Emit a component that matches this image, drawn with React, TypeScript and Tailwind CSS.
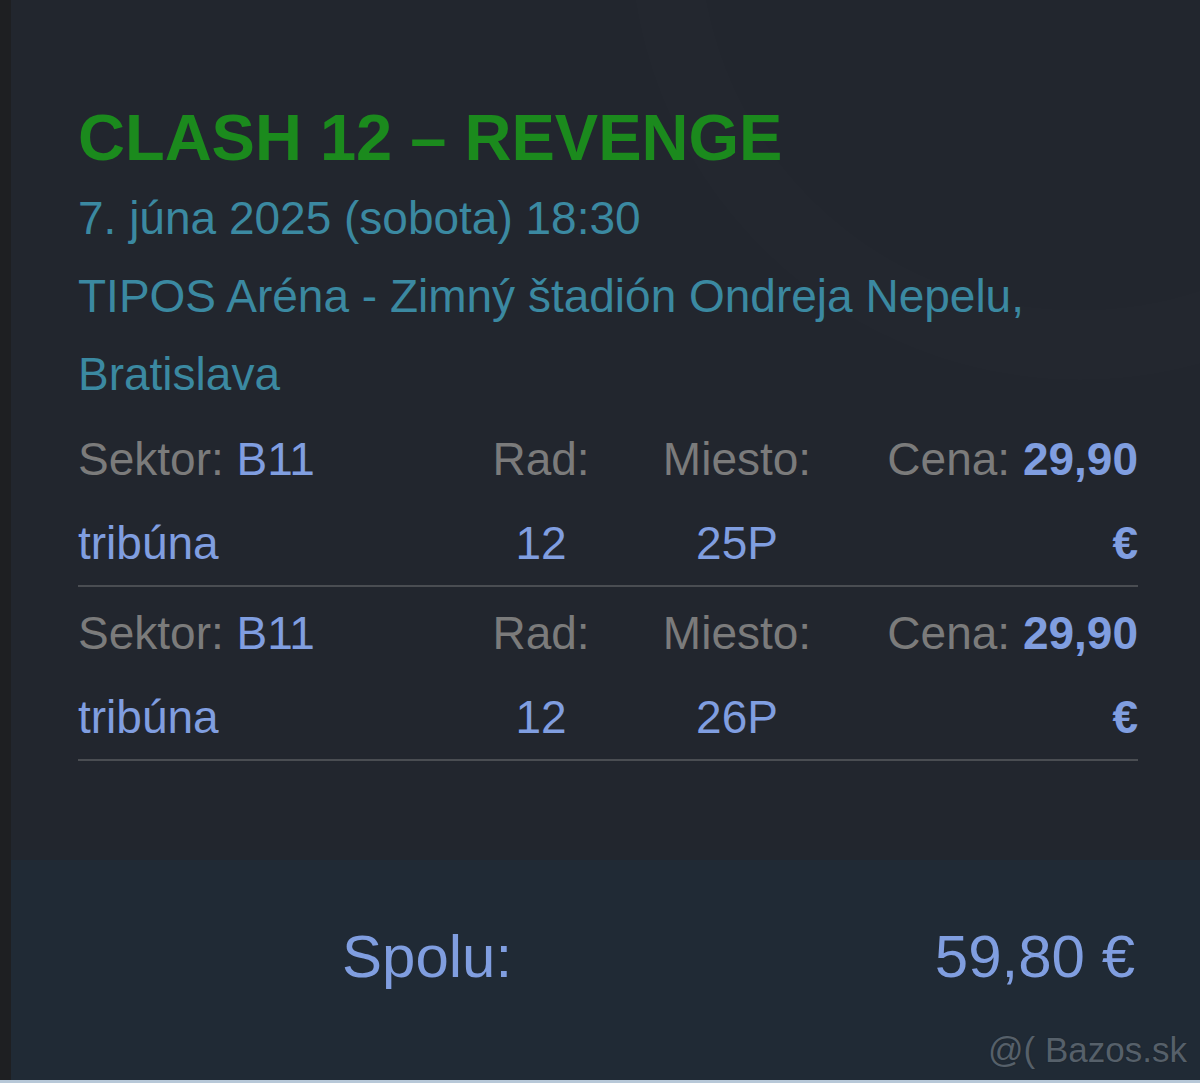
import React from "react";

const tickets = [
  { sektor: "B11", typ: "tribúna", rad: "12", miesto: "25P", cena: "29,90" },
  { sektor: "B11", typ: "tribúna", rad: "12", miesto: "26P", cena: "29,90" },
];

function Ticket({ t }: { t: (typeof tickets)[number] }) {
  return (
    <div className="pt-[4px]">
      <div className="grid grid-cols-[390px_146px_246px_278px] text-[46px] leading-[84px]">
        <div className="text-[#7b7b7b]">
          Sektor: <span className="text-[#809ee0]">{t.sektor}</span>
        </div>
        <div className="text-center text-[#7b7b7b]">Rad:</div>
        <div className="text-center text-[#7b7b7b]">Miesto:</div>
        <div className="text-right text-[#7b7b7b] whitespace-nowrap">
          Cena: <span className="font-bold text-[#809ee0]">{t.cena}</span>
        </div>
        <div className="text-[#809ee0]">{t.typ}</div>
        <div className="text-center text-[#809ee0]">{t.rad}</div>
        <div className="text-center text-[#809ee0]">{t.miesto}</div>
        <div className="text-right font-bold text-[#809ee0]">€</div>
      </div>
      <div className="h-[2px] bg-[#4a4d52]" />
    </div>
  );
}

export default function App() {
  return (
    <div className="flex h-[1083px] w-[1200px] flex-col overflow-hidden bg-[#1e1f22] font-['Liberation_Sans',Arial,sans-serif]">
      <div className="flex flex-1">
        <div className="w-[11px] shrink-0 bg-[#1e1f22]" />
        <div className="relative flex flex-1 flex-col overflow-hidden bg-[#22262e]">
          <div className="pointer-events-none absolute -right-[330px] -top-[520px] h-[900px] w-[900px] rounded-full border-[70px] border-white/[0.007]" />
          <div className="relative flex-1 pl-[67px] pr-[62px] pt-[97px]">
            <h1 className="text-[65px] font-bold leading-[82px] text-[#1b8a1d]">
              CLASH 12 – REVENGE
            </h1>
            <div className="text-[46px] leading-[78px] text-[#3b89a1]">
              <div>7. júna 2025 (sobota) 18:30</div>
              <div>TIPOS Aréna - Zimný štadión Ondreja Nepelu,</div>
              <div>Bratislava</div>
            </div>
            <div>
              {tickets.map((t, i) => (
                <Ticket key={i} t={t} />
              ))}
            </div>
          </div>
          <div className="relative h-[220px] shrink-0 bg-[#202a35] pt-[67px]">
            <div className="flex justify-between pl-[331px] pr-[65px] text-[60px] leading-[60px] text-[#809ee0]">
              <span>Spolu:</span>
              <span>59,80 €</span>
            </div>
            <div className="absolute bottom-[10px] right-[13px] text-[35px] leading-[40px] text-[#56606a] [text-shadow:0_0_1px_#1a1f26]">
              @( Bazos.sk
            </div>
          </div>
        </div>
      </div>
      <div className="h-[3px] shrink-0 bg-[#b7c8d8]" />
    </div>
  );
}
